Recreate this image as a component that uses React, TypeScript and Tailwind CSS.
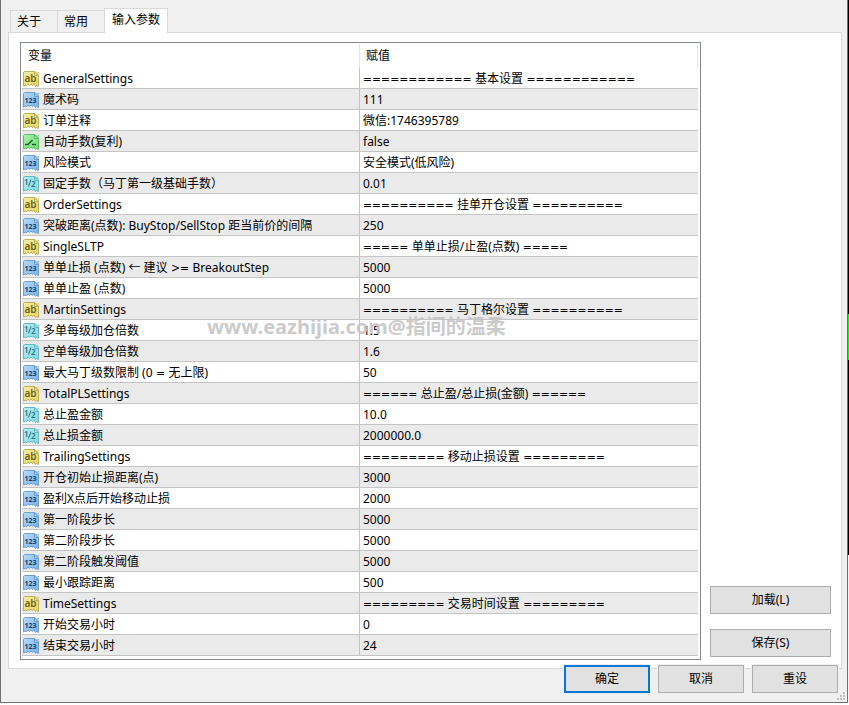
import clsx from "clsx";

type Kind = "string" | "int" | "bool" | "double";

type Param = {
  kind: Kind;
  name: string;
  value: string;
};

const tabs = ["关于", "常用", "输入参数"];

const params: Param[] = [
  { kind: "string", name: "GeneralSettings", value: "============ 基本设置 ============" },
  { kind: "int", name: "魔术码", value: "111" },
  { kind: "string", name: "订单注释", value: "微信:1746395789" },
  { kind: "bool", name: "自动手数(复利)", value: "false" },
  { kind: "int", name: "风险模式", value: "安全模式(低风险)" },
  { kind: "double", name: "固定手数（马丁第一级基础手数）", value: "0.01" },
  { kind: "string", name: "OrderSettings", value: "========== 挂单开仓设置 ==========" },
  { kind: "int", name: "突破距离(点数): BuyStop/SellStop 距当前价的间隔", value: "250" },
  { kind: "string", name: "SingleSLTP", value: "===== 单单止损/止盈(点数) =====" },
  { kind: "int", name: "单单止损 (点数) ← 建议 >= BreakoutStep", value: "5000" },
  { kind: "int", name: "单单止盈 (点数)", value: "5000" },
  { kind: "string", name: "MartinSettings", value: "========== 马丁格尔设置 ==========" },
  { kind: "double", name: "多单每级加仓倍数", value: "1.5" },
  { kind: "double", name: "空单每级加仓倍数", value: "1.6" },
  { kind: "int", name: "最大马丁级数限制 (0 = 无上限)", value: "50" },
  { kind: "string", name: "TotalPLSettings", value: "====== 总止盈/总止损(金额) ======" },
  { kind: "double", name: "总止盈金额", value: "10.0" },
  { kind: "double", name: "总止损金额", value: "2000000.0" },
  { kind: "string", name: "TrailingSettings", value: "========= 移动止损设置 =========" },
  { kind: "int", name: "开仓初始止损距离(点)", value: "3000" },
  { kind: "int", name: "盈利X点后开始移动止损", value: "2000" },
  { kind: "int", name: "第一阶段步长", value: "5000" },
  { kind: "int", name: "第二阶段步长", value: "5000" },
  { kind: "int", name: "第二阶段触发阈值", value: "5000" },
  { kind: "int", name: "最小跟踪距离", value: "500" },
  { kind: "string", name: "TimeSettings", value: "========= 交易时间设置 =========" },
  { kind: "int", name: "开始交易小时", value: "0" },
  { kind: "int", name: "结束交易小时", value: "24" },
];

const palette: Record<Kind, { from: string; to: string; edge: string; ink: string }> = {
  string: { from: "#f6eda6", to: "#e6d666", edge: "#bfae52", ink: "#6b6120" },
  int: { from: "#b4dafb", to: "#7cb0e8", edge: "#6c9fd0", ink: "#123f6a" },
  bool: { from: "#a6f0a8", to: "#6fdd78", edge: "#58bd66", ink: "#12602a" },
  double: { from: "#b4eef4", to: "#84d8e4", edge: "#66b8c6", ink: "#2a727e" },
};

function TypeIcon({ kind }: { kind: Kind }) {
  const { from, to, edge, ink } = palette[kind];

  return (
    <svg className="size-4 shrink-0" viewBox="0 0 16 16" aria-hidden="true">
      <defs>
        <linearGradient id={`fill-${kind}`} x1="0" y1="0" x2="1" y2="1">
          <stop offset="0" stopColor={from} />
          <stop offset="1" stopColor={to} />
        </linearGradient>
      </defs>
      <path
        d="M.5 1.5 1.5.5h10.500L15.500 4v11.500L13.500 14.500 12.500 15.500 11 13 9.500 14.500 8 13 6.500 14.500 5 13 3.500 15 2.500 14 .5 15z"
        fill={`url(#fill-${kind})`}
        stroke={edge}
        strokeLinejoin="round"
      />
      <path d="M11.500 1v3.500H15z" fill={from} stroke={edge} />
      <path d="M14 1h2v2z" fill={to} />
      {kind === "string" && (
        <text x="7.500" y="11" textAnchor="middle" fontSize="10" fontWeight="600" fontFamily="Noto Sans" fill={ink}>
          ab
        </text>
      )}
      {kind === "int" && (
        <text x="7.500" y="11" textAnchor="middle" fontSize="7" fontWeight="700" fontFamily="Noto Sans" fill={ink}>
          123
        </text>
      )}
      {kind === "bool" && <path d="M2 10.500h3L9.500 6M9 10.500h4" fill="none" stroke={ink} strokeWidth="1.500" />}
      {kind === "double" && (
        <g fill={ink} fontFamily="Noto Sans" fontSize="8" fontWeight="600">
          <text x="1" y="9">1</text>
          <text x="8" y="11">2</text>
          <path d="M8 3.500 5.500 10.500" stroke={ink} />
        </g>
      )}
    </svg>
  );
}

// Comparison and rule characters use a wider face than the rest of the text.
function ParamText({ text }: { text: string }) {
  return (
    <>
      {text.split(/( ?>?=+ ?)/).map((part, i) =>
        i % 2 === 1 ? (
          <span key={i} className="font-['DejaVu_Sans_Condensed','DejaVu_Sans',sans-serif] whitespace-pre">
            {part}
          </span>
        ) : (
          part
        ),
      )}
    </>
  );
}

function PushButton({ label, primary, className }: { label: string; primary?: boolean; className?: string }) {
  return (
    <button
      type="button"
      className={clsx(
        "h-7 bg-[#e1e1e1] text-center leading-4",
        primary ? "border-2 border-[#0078d7]" : "border border-[#adadad]",
        className,
      )}
    >
      {label}
    </button>
  );
}

function ParamTable() {
  return (
    <div className="relative min-w-0 flex-1 border border-[#828790] bg-white pt-px pr-0.5 pb-[3px] pl-px">
      <table className="w-full table-fixed border-separate border-spacing-0 text-left">
        <thead>
          <tr className="h-6">
            <th className="w-1/2 border-r border-[#e5e5e5] px-1.5 py-0 font-normal">变量</th>
            <th className="w-1/2 border-r border-[#e5e5e5] px-1.5 py-0 font-normal">赋值</th>
          </tr>
        </thead>
        <tbody>
          {params.map((param, i) => (
            <tr key={param.name} className={clsx("h-[21px]", i % 2 === 1 && "bg-[#eaeaea]")}>
              <td className="border-r border-b border-[#c4c4c4] px-px pt-0.5 pb-0">
                <div className="flex h-[18px] items-center gap-1 whitespace-nowrap">
                  <TypeIcon kind={param.kind} />
                  <span>
                    <ParamText text={param.name} />
                  </span>
                </div>
              </td>
              <td className="border-b border-[#c4c4c4] px-[3px] pt-0.5 pb-0 whitespace-nowrap">
                <div className="h-[18px] leading-[18px]">
                  <ParamText text={param.value} />
                </div>
              </td>
            </tr>
          ))}
        </tbody>
      </table>
      <div className="pointer-events-none absolute top-[270px] left-[186px] text-xl leading-7 font-bold whitespace-nowrap text-[#c4c4c4]/90">
        www.eazhijia.com@指间的温柔
      </div>
    </div>
  );
}

function SizeGrip() {
  return (
    <svg className="absolute right-0.5 bottom-0.5 size-2" viewBox="0 0 8 8" fill="#bfbfbf" aria-hidden="true">
      <path d="M6 0h2v2H6zM3 3h2v2H3zM6 3h2v2H6zM0 6h2v2H0zM3 6h2v2H3zM6 6h2v2H6z" />
    </svg>
  );
}

export default function App() {
  return (
    <div className="bg-[linear-gradient(#000_0_314px,#0f0_314px_360px,#000_360px_555px,#f4f4f4_555px)] pr-px font-['Noto_Sans','Noto_Sans_CJK_SC',sans-serif] text-xs leading-4 text-black">
      <div className="relative border-x border-b border-[#707070] bg-[#f0f0f0] pt-2 pr-[5px] pb-[9px] pl-[7px]">
        <div role="tablist" className="relative -mb-px flex items-end px-0.5">
          {tabs.map((tab, i) => {
            const active = i === tabs.length - 1;

            return (
              <button
                key={tab}
                type="button"
                role="tab"
                aria-selected={active}
                className={clsx(
                  "border-t border-l border-[#d9d9d9]",
                  active ? "h-[25px] border-r bg-white px-[7px] pb-0.5" : "mb-px h-[22px] bg-[#f0f0f0] pr-4 pl-1.5",
                )}
              >
                {tab}
              </button>
            );
          })}
        </div>

        <main className="flex gap-[9px] border border-[#d9d9d9] bg-white pt-[9px] pr-[10px] pb-2 pl-[11px]">
          <ParamTable />
          <div className="flex w-[121px] shrink-0 flex-col justify-end gap-[15px] pb-[3px]">
            <PushButton label="加载(L)" />
            <PushButton label="保存(S)" />
          </div>
        </main>

        <footer className="relative -mt-1 flex justify-end gap-2 pr-1">
          <PushButton label="确定" primary className="w-[86px] ring-1 ring-[#f0f0f0]" />
          <PushButton label="取消" className="w-[86px] ring-1 ring-[#f0f0f0]" />
          <PushButton label="重设" className="w-[86px] ring-1 ring-[#f0f0f0]" />
        </footer>
        <SizeGrip />
      </div>
    </div>
  );
}
